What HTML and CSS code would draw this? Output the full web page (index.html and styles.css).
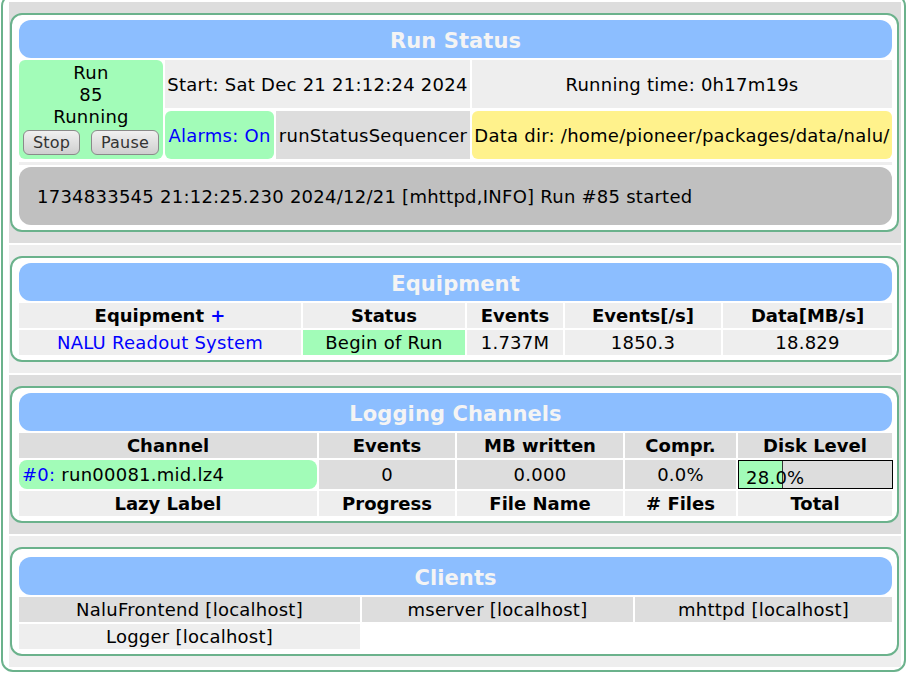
FILE: index.html
```html
<!DOCTYPE html>
<html lang="en">
<head>
    <meta charset="UTF-8">
    <meta name="viewport" content="width=device-width, initial-scale=1.0">
    <title>Status</title>
    <link rel="stylesheet" href="styles.css">
</head>
<body>

    <div class="page">

        <!-- Run Status -->
        <div class="row dark">
            <div class="box">
                <div class="title">Run Status</div>
                <div class="run-grid">
                    <div class="cell run-state green">
                        <div>Run</div>
                        <div>85</div>
                        <div>Running</div>
                        <div class="buttons">
                            <button>Stop</button>
                            <button>Pause</button>
                        </div>
                    </div>
                    <div class="cell start light">Start: Sat Dec 21 21:12:24 2024</div>
                    <div class="cell light">Running time: 0h17m19s</div>
                    <div class="cell green rounded link">Alarms: On</div>
                    <div class="cell dark">runStatusSequencer</div>
                    <div class="cell yellow rounded">Data dir: /home/pioneer/packages/data/nalu/</div>
                </div>
                <div class="sep"></div>
                <div class="message">1734833545 21:12:25.230 2024/12/21 [mhttpd,INFO] Run #85 started</div>
            </div>
        </div>

        <!-- Equipment -->
        <div class="row light">
            <div class="box">
                <div class="title">Equipment</div>
                <div class="tbl equip">
                    <div class="cell light head"><span>Equipment <span class="link">+</span></span></div>
                    <div class="cell light head">Status</div>
                    <div class="cell light head">Events</div>
                    <div class="cell light head">Events[/s]</div>
                    <div class="cell light head">Data[MB/s]</div>

                    <div class="cell light link">NALU Readout System</div>
                    <div class="cell green">Begin of Run</div>
                    <div class="cell light">1.737M</div>
                    <div class="cell light">1850.3</div>
                    <div class="cell light">18.829</div>
                </div>
            </div>
        </div>

        <!-- Logging Channels -->
        <div class="row dark">
            <div class="box">
                <div class="title">Logging Channels</div>
                <div class="tbl logging">
                    <div class="cell dark head">Channel</div>
                    <div class="cell dark head">Events</div>
                    <div class="cell dark head">MB written</div>
                    <div class="cell dark head">Compr.</div>
                    <div class="cell dark head">Disk Level</div>

                    <div class="cell green channel"><span><span class="link">#0:</span> run00081.mid.lz4</span></div>
                    <div class="cell dark">0</div>
                    <div class="cell dark">0.000</div>
                    <div class="cell dark">0.0%</div>
                    <div class="cell disk">
                        <div class="bar">
                            <div class="fill" style="width: 28%"></div>
                            <span class="bar-label">28.0%</span>
                        </div>
                    </div>

                    <div class="cell light head">Lazy Label</div>
                    <div class="cell light head">Progress</div>
                    <div class="cell light head">File Name</div>
                    <div class="cell light head"># Files</div>
                    <div class="cell light head">Total</div>
                </div>
            </div>
        </div>

        <!-- Clients -->
        <div class="row light">
            <div class="box clients-box">
                <div class="title">Clients</div>
                <div class="tbl clients">
                    <div class="cell dark">NaluFrontend [localhost]</div>
                    <div class="cell dark">mserver [localhost]</div>
                    <div class="cell dark">mhttpd [localhost]</div>
                    <div class="cell light">Logger [localhost]</div>
                </div>
            </div>
        </div>

    </div>

</body>
</html>
```

FILE: styles.css
```css
body {
    margin: 0;
    font-family: "DejaVu Sans", Verdana, sans-serif;
    font-size: 18px;
    letter-spacing: 0.25px;
    color: #000;
    background-color: #fff;
}

/* outer frame, top edge scrolled off the window */
.page {
    box-sizing: border-box;
    width: 905px;
    margin: -6px 0 0 1px;
    padding: 6px 3px 3px 6px;
    border: 2px solid #6bb28c;
    border-radius: 12px;
    display: flex;
    flex-direction: column;
    gap: 2px;
}

.row {
    padding: 11px 2px 11px 1px;
}

.dark {
    background-color: #ddd;
}

.light {
    background-color: #eee;
}

.green {
    background-color: #a2fcb8;
}

.yellow {
    background-color: #fff28c;
}

.rounded {
    border-radius: 6px;
}

.link {
    color: #0000ff;
}

/* section box */
.box {
    background-color: #fff;
    border: 2px solid #6bb28c;
    border-radius: 12px;
    padding: 5px 5px 5px 7px;
}

.title {
    height: 38px;
    line-height: 42px;
    overflow: hidden;
    background-color: #8cbeff;
    color: #f4f4f4;
    font-size: 21px;
    font-weight: bold;
    letter-spacing: 0.1px;
    text-align: center;
    border-radius: 12px;
}

.cell {
    display: flex;
    align-items: center;
    justify-content: center;
    white-space: nowrap;
    line-height: 21px;
}

.head {
    font-weight: bold;
    letter-spacing: 0;
}

/* Run Status */
.run-grid {
    display: grid;
    grid-template-columns: 144px 109px 194px 1fr;
    grid-template-rows: 48px 48px;
    column-gap: 2px;
    row-gap: 3px;
    margin-top: 2px;
}

.run-state {
    grid-row: 1 / span 2;
    flex-direction: column;
    justify-content: flex-start;
    padding-top: 2px;
    line-height: 22px;
    border-radius: 6px;
}

.start {
    grid-column: 2 / span 2;
}

.buttons {
    align-self: stretch;
    display: flex;
    justify-content: space-between;
    padding: 0 4px;
    margin-top: 2px;
}

button {
    height: 25px;
    padding: 0 9px;
    font-family: "DejaVu Sans", Verdana, sans-serif;
    font-size: 16px;
    letter-spacing: 0.2px;
    color: #333;
    background: linear-gradient(#f0f0f0, #cfcfcf);
    border: 1px solid #8a8a8a;
    border-radius: 6px;
}

.sep {
    height: 3px;
    background-color: #eee;
    margin: 3px 0 2px 0;
}

.message {
    height: 58px;
    display: flex;
    align-items: center;
    padding-left: 18px;
    background-color: #c0c0c0;
    border-radius: 12px;
}

/* tables */
.tbl {
    display: grid;
    gap: 2px;
    margin-top: 2px;
}

.tbl .cell {
    min-height: 25px;
}

.equip {
    grid-template-columns: 282px 162px 96px 156px 1fr;
}

.logging {
    grid-template-columns: 298px 136px 166px 111px 1fr;
}

.channel {
    justify-content: flex-start;
    padding-left: 3px;
    border-radius: 8px;
}

.disk {
    align-items: stretch;
}

.bar {
    position: relative;
    flex: 1;
    height: 27px;
    margin-right: -1px;
    border: 1px solid #000;
    background-color: #ddd;
}

.fill {
    height: 100%;
    background-color: #a2fcb8;
    border-right: 1px solid #333;
}

.bar-label {
    position: absolute;
    left: 7px;
    top: 6px;
    line-height: 21px;
}

/* Clients */
.clients-box {
    padding-top: 8px;
}

.clients {
    grid-template-columns: 341px 271px 1fr;
}
```
